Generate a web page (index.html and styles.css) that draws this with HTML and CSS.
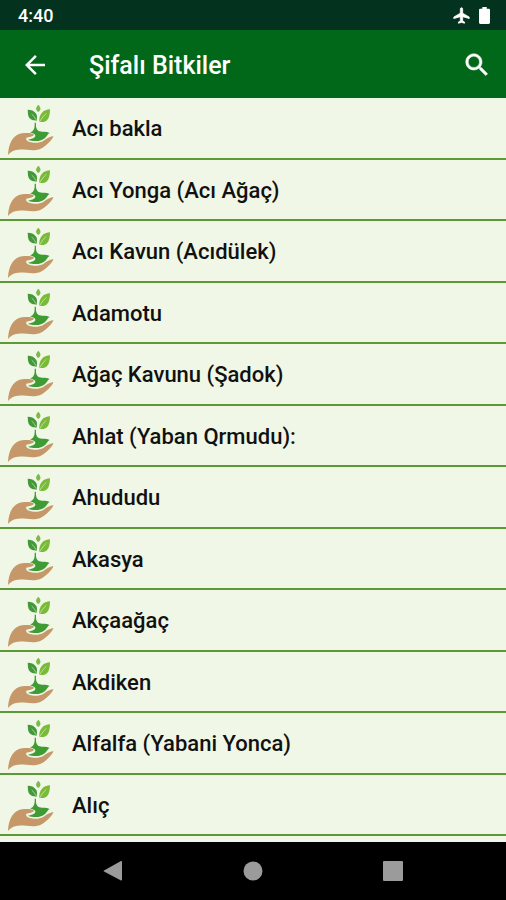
FILE: index.html
```html
<!DOCTYPE html>
<html lang="tr">
  <head>
    <meta charset="UTF-8" />
    <meta name="viewport" content="width=device-width, initial-scale=1.0" />
    <title>Şifalı Bitkiler</title>
    <link rel="stylesheet" href="styles.css">
  </head>

  <body>
    <svg class="defs" aria-hidden="true">
      <symbol id="plant" viewBox="20 18 144 162">
        <path fill="#c69768" d="M23 177C24 158 28 138 40 125C50 114 65 110 78 111C90 111 99 113 101 117C97 122 86 124 78 125C75 130 80 135 88 138C98 141 118 142 129 135C138 128 148 122 159 120C158 127 152 133 145 140C134 151 123 160 108 162C87 165 62 157 44 163C35 166 28 171 23 177Z" />
        <path fill="#3f9c35" d="M103 80L107 80C106 96 109 102 118 106C126 109 138 106 148 111C142 114 141 119 135 125C123 137 101 138 83 131C92 129 103 127 105 120C106 115 98 112 89 109C98 107 104 100 103 80Z" />
        <path fill="#43983a" d="M82 41C94 41 103 45 108 54C111 60 110 67 109 74C99 73 89 71 85 62C82 55 83 48 82 41Z" />
        <path fill="none" stroke="#cfe8bd" stroke-width="2" d="M94 54C99 58 103 64 107 71" />
        <path fill="#79bb38" d="M149 40C149 53 147 66 140 73C134 79 126 79 117 77C116 67 118 57 125 50C131 43 140 41 149 40Z" />
        <path fill="none" stroke="#dcefc4" stroke-width="2" d="M138 52C130 59 124 67 119 76" />
        <path fill="#7dba4b" d="M114 26C122 34 123 41 114 48C104 41 106 34 114 26Z" />
      </symbol>
    </svg>

    <div class="status-bar">
      <span>4:40</span>
      <div class="status-icons">
        <svg class="plane" viewBox="1 1 22 22" aria-hidden="true">
          <path fill="#fff" stroke="#fff" stroke-width="1" d="M22 16v-2l-8.500-5V3.500C13.500 2.670 12.830 2 12 2s-1.500.67-1.500 1.500V9L2 14v2l8.500-2.500V19L8 20.500V22l4-1 4 1v-1.500L13.500 19v-5.500L22 16z" />
        </svg>
        <svg class="battery" viewBox="7 2 10 20" preserveAspectRatio="none" aria-hidden="true">
          <path fill="#fff" d="M15.670 4H14V2h-4v2H8.330C7.600 4 7 4.600 7 5.330v15.330C7 21.400 7.600 22 8.330 22h7.330c.74 0 1.340-.6 1.340-1.330V5.330C17 4.600 16.400 4 15.670 4z" />
        </svg>
      </div>
    </div>

    <header class="toolbar">
      <button type="button" aria-label="Geri">
        <svg viewBox="0 0 24 24"><path fill="#fff" d="M20 11H7.830l5.590-5.590L12 4l-8 8 8 8 1.410-1.410L7.830 13H20v-2z" /></svg>
      </button>
      <h1>Şifalı Bitkiler</h1>
      <button type="button" aria-label="Ara">
        <svg viewBox="0 0 24 24"><path fill="#fff" stroke="#fff" stroke-width="0.400" d="M15.500 14h-.79l-.28-.27C15.410 12.590 16 11.110 16 9.500 16 5.910 13.090 3 9.500 3S3 5.910 3 9.500 5.910 16 9.500 16c1.610 0 3.090-.59 4.230-1.570l.27.28v.79l5 4.990L20.490 19l-4.990-5zm-6 0C7.010 14 5 11.990 5 9.500S7.010 5 9.500 5 14 7.010 14 9.500 11.990 14 9.500 14z" /></svg>
      </button>
    </header>

    <ul class="plants">
      <li><a href="#"><svg><use href="#plant" /></svg>Acı bakla</a></li>
      <li><a href="#"><svg><use href="#plant" /></svg>Acı Yonga (Acı Ağaç)</a></li>
      <li><a href="#"><svg><use href="#plant" /></svg>Acı Kavun (Acıdülek)</a></li>
      <li><a href="#"><svg><use href="#plant" /></svg>Adamotu</a></li>
      <li><a href="#"><svg><use href="#plant" /></svg>Ağaç Kavunu (Şadok)</a></li>
      <li><a href="#"><svg><use href="#plant" /></svg>Ahlat (Yaban Qrmudu):</a></li>
      <li><a href="#"><svg><use href="#plant" /></svg>Ahududu</a></li>
      <li><a href="#"><svg><use href="#plant" /></svg>Akasya</a></li>
      <li><a href="#"><svg><use href="#plant" /></svg>Akçaağaç</a></li>
      <li><a href="#"><svg><use href="#plant" /></svg>Akdiken</a></li>
      <li><a href="#"><svg><use href="#plant" /></svg>Alfalfa (Yabani Yonca)</a></li>
      <li><a href="#"><svg><use href="#plant" /></svg>Alıç</a></li>
    </ul>

    <nav class="nav-bar">
      <button type="button" aria-label="Geri">
        <svg viewBox="0 0 24 24"><path fill="#9b9b9b" d="M3 11.500L20 2Q21 1.500 21 3V20Q21 22 20 21.500L3 12.500Q2 12 3 11.500Z" /></svg>
      </button>
      <button type="button" aria-label="Ana ekran">
        <svg viewBox="0 0 24 24"><circle fill="#9b9b9b" cx="12" cy="12" r="9.500" /></svg>
      </button>
      <button type="button" aria-label="Son uygulamalar">
        <svg viewBox="0 0 24 24"><rect fill="#9b9b9b" x="2" y="2" width="20" height="20" rx="1" /></svg>
      </button>
    </nav>
  </body>
</html>
```

FILE: styles.css
```css
* {
  box-sizing: border-box;
}

body {
  margin: 0;
  min-height: 100vh;
  display: flex;
  flex-direction: column;
  font-family: Roboto, "Liberation Sans", sans-serif;
  font-weight: 500;
  background-color: #f0f7e6;
}

svg {
  display: block;
  flex: none;
}

button {
  padding: 0;
  border: none;
  background: none;
  cursor: pointer;
}

.defs {
  position: absolute;
  width: 0;
  height: 0;
}

.status-bar {
  display: flex;
  align-items: center;
  justify-content: space-between;
  height: 30px;
  padding: 1px 16px 0 18px;
  color: #fff;
  font-size: 18px;
  background-color: #03321f;
}

.status-icons {
  display: flex;
  align-items: center;
  gap: 9px;
}

.plane {
  width: 17px;
  height: 17px;
}

.battery {
  width: 11px;
  height: 17px;
}

.toolbar {
  display: flex;
  align-items: center;
  height: 68px;
  padding: 1px 14px 0 20px;
  color: #fff;
  background-color: #026819;
}

.toolbar svg {
  width: 30px;
  height: 30px;
}

.toolbar h1 {
  flex: 1;
  margin: 0;
  padding: 2px 0 0 39px;
  font-size: 25px;
  font-weight: 500;
}

.plants {
  flex: 1;
  display: grid;
  grid-auto-rows: 1fr;
  margin: 0;
  padding: 0 0 6px;
  list-style: none;
}

.plants li {
  display: flex;
  border-bottom: 2px solid #5c9a35;
}

.plants a {
  flex: 1;
  display: flex;
  align-items: center;
  gap: 17px;
  padding: 2px 7px 0;
  color: #111;
  font-size: 22px;
  text-decoration: none;
}

.plants svg {
  width: 48px;
  height: 54px;
}

.nav-bar {
  display: grid;
  grid-template-columns: repeat(3, 1fr);
  height: 58px;
  padding: 0 43px;
  background-color: #000;
}

.nav-bar button {
  display: flex;
  align-items: center;
  justify-content: center;
}

.nav-bar svg {
  width: 24px;
  height: 24px;
}
```
